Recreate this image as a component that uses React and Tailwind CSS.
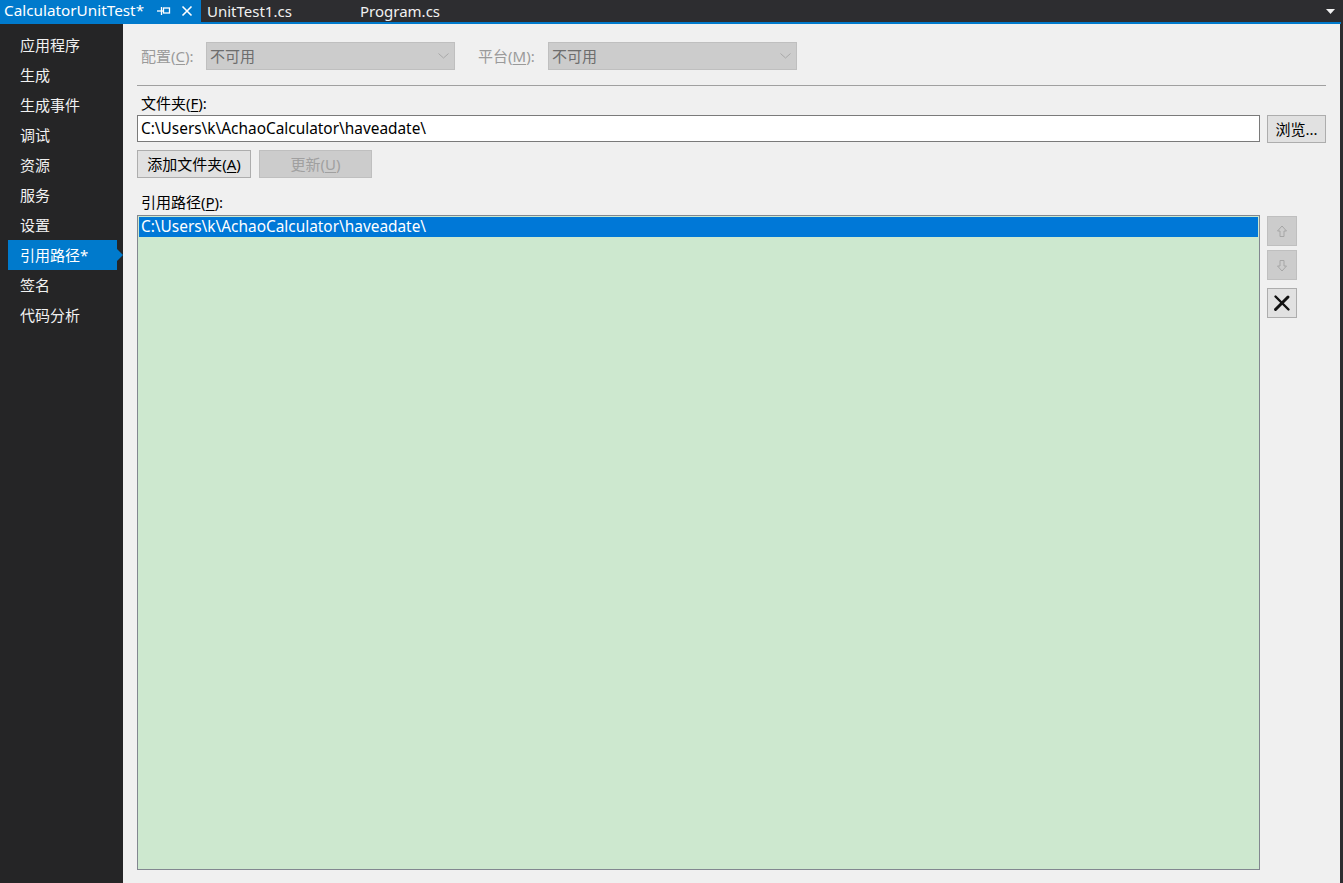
import React from "react";

const FONT = { fontFamily: '"Noto Sans", "Noto Sans CJK SC", sans-serif' };

const NAV = ["应用程序", "生成", "生成事件", "调试", "资源", "服务", "设置", "引用路径*", "签名", "代码分析"];
const ACTIVE = "引用路径*";
const PATH = "C:\\Users\\k\\AchaoCalculator\\haveadate\\";

const Key = ({ children }) => <span className="underline underline-offset-2">{children}</span>;

const Chevron = () => (
  <svg width="11" height="6" viewBox="0 0 11 6" className="shrink-0">
    <path d="M0.5 0.5 L5.5 5 L10.5 0.5" fill="none" stroke="#a8a8a8" strokeWidth="1" />
  </svg>
);

const Combo = () => (
  <div className="w-[249px] h-[28px] bg-[#cccccc] border border-[#bfbfbf] flex items-center justify-between pl-[3px] pr-[5px]">
    <span className="text-[#6d6d6d]">不可用</span>
    <Chevron />
  </div>
);

const ArrowUp = () => (
  <svg width="12" height="13" viewBox="0 0 12 13">
    <path d="M6 1 L10.5 6 L8 6 L8 11.5 L4 11.5 L4 6 L1.5 6 Z" fill="none" stroke="#a6a6a6" strokeWidth="1" />
  </svg>
);

const ArrowDown = () => (
  <svg width="12" height="13" viewBox="0 0 12 13">
    <path d="M6 12 L10.5 7 L8 7 L8 1.5 L4 1.5 L4 7 L1.5 7 Z" fill="none" stroke="#a6a6a6" strokeWidth="1" />
  </svg>
);

const DeleteX = () => (
  <svg width="18" height="18" viewBox="0 0 18 18">
    <path d="M2.5 2.5 L15.5 15.5" stroke="#111" strokeWidth="2.4" strokeLinecap="round" />
    <path d="M15 3 L2.5 15.5" stroke="#111" strokeWidth="3" strokeLinecap="round" />
  </svg>
);

const App = () => {
  return (
    <div className="w-[1343px] h-[883px] flex flex-col bg-[#2d2d30] text-[15px] overflow-hidden" style={FONT}>
      {/* TABS */}
      <div className="h-[22px] flex items-stretch text-[#f1f1f1] leading-none">
        <div className="w-[201px] bg-[#007acc] flex items-center pl-[4px] text-white">
          <span className="w-[150px] text-[15.3px]">CalculatorUnitTest*</span>
          <svg width="14" height="10" viewBox="0 0 14 10" className="ml-[3px]">
            <path d="M0 5 H6" stroke="#fff" strokeWidth="1.3" />
            <path d="M4.5 1 V9" stroke="#fff" strokeWidth="1.3" />
            <rect x="6.5" y="2" width="6" height="5" fill="none" stroke="#fff" strokeWidth="1.3" />
          </svg>
          <svg width="12" height="12" viewBox="0 0 12 12" className="ml-[10px]">
            <path d="M1.5 1.5 L10.5 10.5 M10.5 1.5 L1.5 10.5" stroke="#fff" strokeWidth="1.6" />
          </svg>
        </div>
        <div className="w-[153px] flex items-center pl-[6px]">UnitTest1.cs</div>
        <div className="flex-1 flex items-center pl-[6px]">Program.cs</div>
        <div className="w-[20px] flex items-center justify-center pr-[6px]">
          <svg width="9" height="5" viewBox="0 0 9 5">
            <path d="M0 0 H9 L4.5 5 Z" fill="#f1f1f1" />
          </svg>
        </div>
      </div>
      <div className="h-[2px] bg-[#007acc] mr-[2px]" />

      <div className="flex-1 flex min-h-0">
        {/* SIDEBAR */}
        <div className="w-[123px] bg-[#252526] pt-[6px] text-[#f1f1f1]">
          {NAV.map(item => (
            item === ACTIVE ? (
              <div key={item} className="relative h-[30px] ml-[8px] w-[109px] bg-[#007acc] flex items-center pl-[12px] text-white">
                {item}
                <span className="absolute right-[-6px] top-[9px] w-0 h-0 border-y-[6px] border-y-transparent border-l-[6px] border-l-[#007acc]" />
              </div>
            ) : (
              <div key={item} className="h-[30px] flex items-center pl-[20px]">{item}</div>
            )
          ))}
        </div>

        {/* CONTENT */}
        <div className="flex-1 bg-[#f0f0f0] px-[14px] pt-[18px] pb-[13px] flex flex-col text-black min-h-0">
          <div className="flex items-center h-[28px]">
            <div className="w-[69px] pl-[4px] text-[#9a9a9a]">配置(<Key>C</Key>):</div>
            <Combo />
            <div className="w-[70px] ml-[23px] text-[#9a9a9a]">平台(<Key>M</Key>):</div>
            <Combo />
          </div>

          <div className="mt-[15px] h-px bg-[#a0a0a0]" />

          <div className="mt-[7px] h-[20px] flex items-center pl-[4px]">文件夹(<Key>F</Key>):</div>
          <div className="mt-[2px] flex gap-[7px]">
            <div className="flex-1 h-[27px] bg-white border border-[#7a7a7a] flex items-center pl-[3px] text-[15.4px]">
              {PATH}
            </div>
            <button className="w-[59px] h-[28px] bg-[#e1e1e1] border border-[#adadad] flex items-center justify-center">
              浏览...
            </button>
          </div>

          <div className="mt-[7px] flex gap-[8px]">
            <button className="w-[114px] h-[28px] bg-[#e1e1e1] border border-[#adadad] flex items-center justify-center">
              添加文件夹(<Key>A</Key>)
            </button>
            <button className="w-[113px] h-[28px] bg-[#cccccc] border border-[#bfbfbf] flex items-center justify-center text-[#a0a0a0]">
              更新(<Key>U</Key>)
            </button>
          </div>

          <div className="mt-[14px] h-[20px] flex items-center pl-[4px]">引用路径(<Key>P</Key>):</div>
          <div className="mt-[3px] flex-1 flex gap-[7px] min-h-0">
            <div className="flex-1 bg-[#cde8cf] border border-[#828790] p-px">
              <div className="h-[20px] bg-[#0078d7] text-white flex items-center pl-[2px] text-[15.4px]">
                {PATH}
              </div>
            </div>
            <div className="w-[59px] flex flex-col pt-px">
              <button className="w-[30px] h-[30px] bg-[#cccccc] border border-[#bfbfbf] flex items-center justify-center">
                <ArrowUp />
              </button>
              <button className="mt-[4px] w-[30px] h-[30px] bg-[#cccccc] border border-[#bfbfbf] flex items-center justify-center">
                <ArrowDown />
              </button>
              <button className="mt-[8px] w-[30px] h-[30px] bg-[#e1e1e1] border border-[#adadad] flex items-center justify-center">
                <DeleteX />
              </button>
            </div>
          </div>
        </div>
        <div className="w-[3px] bg-[#2d2d30]" />
      </div>
    </div>
  );
};

export default App;
